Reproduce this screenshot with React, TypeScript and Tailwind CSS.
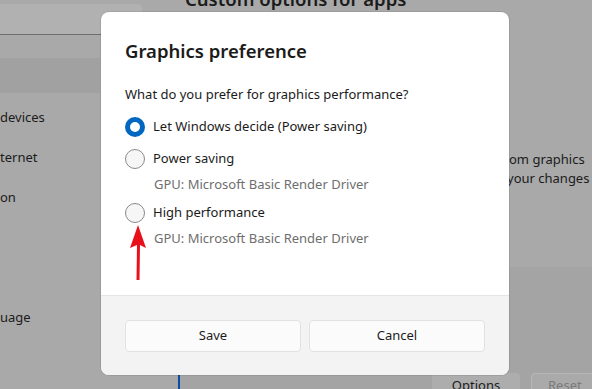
export default function App() {
  const font = { fontFamily: '"Noto Sans", "Open Sans", sans-serif' };

  return (
    <div className="relative w-[592px] h-[389px] overflow-hidden bg-[#a9a9a9] text-[#1b1b1b]" style={font}>
      {/* Settings window behind the overlay */}
      <div className="flex h-full">
        {/* Nav column */}
        <div className="w-[178px] shrink-0 flex flex-col">
          <div className="mt-[4px] h-[31px] w-[142px] rounded-tr-[4px] bg-[#b1b1b1] border-b border-[#6f6f6f]" />
          <div className="mt-[23px] h-[35px] w-[100px] bg-[#a1a1a1]" />
          <div className="mt-[14px] flex flex-col text-[13px]">
            <div className="h-[40px] leading-[20px]">devices</div>
            <div className="h-[40px] leading-[20px]">ternet</div>
            <div className="h-[40px] leading-[20px]">on</div>
            <div className="h-[40px]" />
            <div className="h-[40px]" />
            <div className="h-[40px] leading-[20px]">uage</div>
          </div>
        </div>

        {/* Main content */}
        <div className="flex-1 flex flex-col">
          <div className="-mt-[15px] pl-[7px] text-[18.5px] font-semibold leading-[28px]">Custom options for apps</div>
          <div className="mt-[137px] pl-[331px] text-[13px] leading-[19px] whitespace-nowrap">
            <div>om graphics</div>
            <div className="-ml-[2px]">your changes</div>
          </div>
          <div className="mt-[79px] flex-1 bg-[#a4a4a4] flex items-end">
            <div className="flex w-full items-start h-[16px]">
              <div className="w-[2px] h-full bg-[#0a4ea3]" />
              <div className="ml-[252px] w-[88px] h-[20px] rounded-t-[4px] bg-[#adadad] text-center text-[13px] leading-[24px]">Options</div>
              <div className="ml-[11px] w-[80px] h-[20px] rounded-t-[4px] border border-[#b8b8b8] bg-[#aaaaaa] text-[13px] leading-[22px] pl-[16px] text-[#7b7b7b]">Reset</div>
            </div>
          </div>
        </div>
      </div>

      {/* Dialog */}
      <div className="absolute left-[101px] top-[12px] w-[408px] h-[363px] rounded-[8px] bg-white overflow-hidden flex flex-col shadow-[0_0_0_1px_rgba(0,0,0,0.08)]">
        <div className="flex-1 px-[24px] pt-[25px]">
          <div className="text-[18.5px] font-semibold leading-[28px] text-[#1b1b1b]">Graphics preference</div>
          <div className="mt-[19px] text-[13px] leading-[20px] text-[#1b1b1b]">What do you prefer for graphics performance?</div>

          <div className="mt-[12px] flex items-center gap-[8px] h-[22px]">
            <div className="w-[20px] h-[20px] rounded-full bg-[#0067c0] flex items-center justify-center">
              <div className="w-[10px] h-[10px] rounded-full bg-white" />
            </div>
            <span className="text-[13px]">Let Windows decide (Power saving)</span>
          </div>

          <div className="mt-[10px] flex items-center gap-[8px] h-[22px]">
            <div className="w-[20px] h-[20px] rounded-full border border-[#8a8a8a] bg-[#f6f6f6]" />
            <span className="text-[13px]">Power saving</span>
          </div>
          <div className="mt-[4px] pl-[29px] text-[13px] leading-[20px] text-[#6e6e6e]">GPU: Microsoft Basic Render Driver</div>

          <div className="mt-[8px] flex items-center gap-[8px] h-[22px]">
            <div className="w-[20px] h-[20px] rounded-full border border-[#8a8a8a] bg-[#f6f6f6]" />
            <span className="text-[13px]">High performance</span>
          </div>
          <div className="mt-[4px] pl-[29px] text-[13px] leading-[20px] text-[#6e6e6e]">GPU: Microsoft Basic Render Driver</div>
        </div>

        <div className="h-[80px] border-t border-[#e5e5e5] bg-[#f3f3f3] px-[24px] flex items-center gap-[8px]">
          <button className="flex-1 h-[32px] rounded-[4px] border border-[#e2e2e2] bg-[#fbfbfb] text-[13px] text-[#1b1b1b]">Save</button>
          <button className="flex-1 h-[32px] rounded-[4px] border border-[#e2e2e2] bg-[#fbfbfb] text-[13px] text-[#1b1b1b]">Cancel</button>
        </div>
      </div>

      {/* Red annotation arrow */}
      <svg className="absolute left-[126px] top-[223px]" width="24" height="60" viewBox="0 0 24 60">
        <path d="M12 2 L4 25 L11 22 L10.5 57 L13.5 57 L14 22 L20 25 Z" fill="#e8101a" />
      </svg>
    </div>
  );
}
